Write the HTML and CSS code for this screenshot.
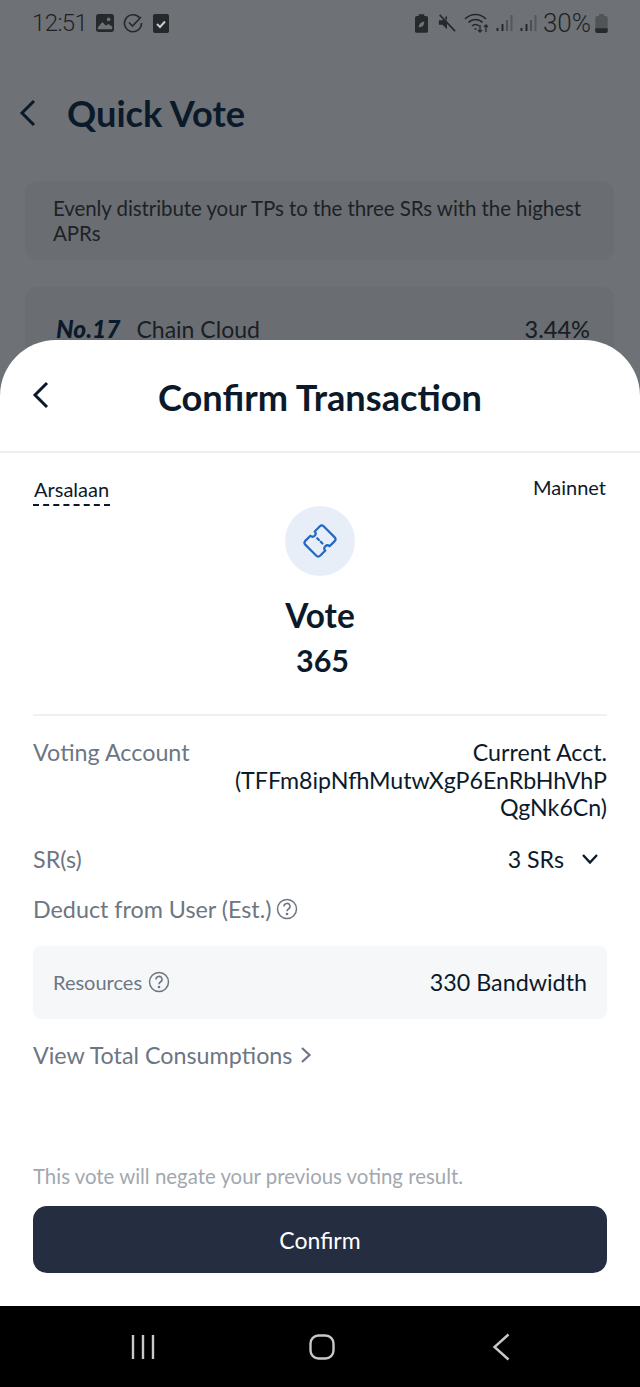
FILE: index.html
```html
<!DOCTYPE html>
<html lang="en">
<head>
<meta charset="utf-8">
<title>Confirm Transaction</title>
<link rel="stylesheet" href="styles.css">
</head>
<body>
<div class="screen">
  <div class="backdrop">
    <div class="status">
      <span class="time">12:51</span>
      <svg class="si s-img" width="18" height="18" viewBox="0 0 20 20"><rect x="0" y="0" width="20" height="20" rx="3" fill="#26292c"/><circle cx="14" cy="6" r="2" fill="#6e7276"/><path d="M2 15l5-6 4 4 2.500-2 4.500 3v3H2z" fill="#6e7276"/></svg>
      <svg class="si s-chk" width="20" height="20" viewBox="0 0 20 20" fill="none" stroke="#26292c" stroke-width="1.600"><path d="M16.500 4.800A8.500 8.500 0 1 0 18.500 10"/><path d="M6 9.500l3.500 3.500L18 4"/></svg>
      <svg class="si s-box" width="16" height="19" viewBox="0 0 16 19"><rect x="0" y="0" width="16" height="19" rx="2" fill="#26292c"/><path d="M4 10l3 3 5-5.500" fill="none" stroke="#c9cbcd" stroke-width="2"/></svg>
      <span class="grow"></span>
      <svg class="si s-leaf" width="13" height="19" viewBox="0 0 14 20"><path d="M4 0h6v2h2a2 2 0 0 1 2 2v14a2 2 0 0 1-2 2H2a2 2 0 0 1-2-2V4a2 2 0 0 1 2-2h2z" fill="#26292c"/><path d="M4 14c0-4 3-6 6-6 0 4-2 6-6 6z" fill="#6e7276"/></svg>
      <svg class="si s-mute" width="18" height="18" viewBox="0 0 20 20"><path d="M1 7h4l5-5v15l-5-5H1z" fill="#26292c"/><path d="M2 1l17 18" stroke="#26292c" stroke-width="2"/><path d="M3 0l17 18" stroke="#6e7276" stroke-width="1"/></svg>
      <svg class="si s-wifi" width="26" height="20" viewBox="0 0 26 20" fill="none" stroke="#26292c" stroke-width="1.700"><path d="M1 6c6-6 15-6 21 0"/><path d="M4.500 9.500c4-4 10-4 14 0"/><path d="M8 13c2-2 5-2 7 0"/><circle cx="11.500" cy="16" r="1" fill="#26292c" stroke="none"/><path d="M16 12v7m-2-2l2 2 2-2M22 19v-7m-2 2l2-2 2 2" stroke-width="1.300"/></svg>
      <svg class="si s-sig" width="17" height="18" viewBox="0 0 16 18"><rect x="0" y="14" width="2" height="3" fill="#26292c"/><rect x="5" y="10" width="2" height="7" fill="#26292c"/><rect x="9.500" y="6" width="2" height="11" fill="#4c4f52"/><rect x="14" y="1" width="2" height="16" fill="#55585b"/></svg>
      <svg class="si s-sig2" width="17" height="18" viewBox="0 0 16 18"><rect x="0" y="14" width="2" height="3" fill="#26292c"/><rect x="5" y="10" width="2" height="7" fill="#26292c"/><rect x="9.500" y="6" width="2" height="11" fill="#4c4f52"/><rect x="14" y="1" width="2" height="16" fill="#55585b"/></svg>
      <span class="pct">30%</span>
      <svg class="bat" width="13" height="19" viewBox="0 0 13 20"><path d="M4 0h5v2h2a2 2 0 0 1 2 2v14a2 2 0 0 1-2 2H2a2 2 0 0 1-2-2V4a2 2 0 0 1 2-2h2z" fill="#505457"/><path d="M0 15h13v3a2 2 0 0 1-2 2H2a2 2 0 0 1-2-2z" fill="#26292c"/></svg>
    </div>
    <header class="page-head">
      <svg class="page-back" width="18" height="28" viewBox="0 0 18 28" fill="none" stroke="#0b1a2b" stroke-width="3"><path d="M15 2L3 14l12 12"/></svg>
      <h1 class="page-title">Quick Vote</h1>
    </header>
    <div class="note">Evenly distribute your TPs to the three SRs with the highest APRs</div>
    <div class="sr-card">
      <b class="no">No.17</b>
      <span class="sr-name">Chain Cloud</span>
      <span class="sr-apr">3.44%</span>
    </div>
  </div>

  <section class="sheet">
    <div class="sheet-head">
      <svg class="sheet-back" width="18" height="28" viewBox="0 0 18 28" fill="none" stroke="#0b1a2b" stroke-width="3"><path d="M15 2L3 14l12 12"/></svg>
      <h2 class="sheet-title">Confirm Transac<span class="lig">ti</span>on</h2>
    </div>
    <div class="sheet-body">
      <div class="acct-row">
        <span class="acct">Arsalaan</span>
        <span class="net">Mainnet</span>
      </div>
      <div class="summary">
        <div class="badge">
          <svg width="36" height="36" viewBox="-18 -18 36 36" fill="none" stroke="#2468c0" stroke-width="2.200" stroke-linejoin="round" stroke-linecap="round"><g transform="rotate(-45)"><path d="M-13 -7.500a3 3 0 0 1 3 -3H-3a3 3 0 0 0 6 0H10a3 3 0 0 1 3 3V7.500a3 3 0 0 1 -3 3H3a3 3 0 0 0 -6 0H-10a3 3 0 0 1 -3 -3Z"/><path d="M0 -4V4" stroke-dasharray="2.500 2.500"/></g></svg>
        </div>
        <div class="action">Vote</div>
        <div class="amount">365</div>
      </div>
      <dl class="details">
        <div class="row top">
          <dt class="label">Vo<span class="lig">ti</span>ng Account</dt>
          <dd class="value addr"><span class="addr-line">Current Acct.</span><span class="addr-line">(TFFm8ipNfhMutwXgP6EnRbHhVhPQgNk6Cn)</span></dd>
        </div>
        <div class="row sr">
          <dt class="label">SR(s)</dt>
          <dd class="value srs">3 SRs
            <svg width="18" height="12" viewBox="0 0 18 12" fill="none" stroke="#0b1a2b" stroke-width="2.400"><path d="M2 2l7 7.500L16 2"/></svg>
          </dd>
        </div>
        <div class="deduct">
          <span class="label">Deduct from User (Est.)</span>
          <svg class="help" width="22" height="22" viewBox="0 0 22 22" fill="none" stroke="#6d7683" stroke-width="1.500"><circle cx="11" cy="11" r="9.500"/><path d="M8 8.500a3 3 0 1 1 4.500 2.500c-1 .6-1.500 1-1.500 2.300"/><circle cx="11" cy="16" r=".6"/></svg>
        </div>
      </dl>
      <div class="res-box">
        <span class="res-label">Resources
          <svg class="help" width="22" height="22" viewBox="0 0 22 22" fill="none" stroke="#6d7683" stroke-width="1.500"><circle cx="11" cy="11" r="9.500"/><path d="M8 8.500a3 3 0 1 1 4.500 2.500c-1 .6-1.500 1-1.500 2.300"/><circle cx="11" cy="16" r=".6"/></svg>
        </span>
        <span class="res-value">330 Bandwidth</span>
      </div>
      <div class="view-total">
        <span>View Total Consump<span class="lig">ti</span>ons</span>
        <svg width="12" height="18" viewBox="0 0 12 18" fill="none" stroke="#6d7683" stroke-width="2.200"><path d="M2 2l7.500 7L2 16"/></svg>
      </div>
      <p class="warning">This vote will negate your previous vo<span class="lig">ti</span>ng result.</p>
      <button class="confirm">Confirm</button>
    </div>
  </section>

  <nav class="navbar">
    <svg width="26" height="26" viewBox="0 0 26 26" stroke="#c8c8c8" stroke-width="2.400"><path d="M3 1v24M13 1v24M23 1v24"/></svg>
    <svg class="nav-home" width="26" height="26" viewBox="0 0 26 26" fill="none" stroke="#c8c8c8" stroke-width="2.400"><rect x="1.500" y="1.500" width="23" height="23" rx="8"/></svg>
    <svg class="nav-back" width="18" height="28" viewBox="0 0 18 28" fill="none" stroke="#c8c8c8" stroke-width="2.400"><path d="M16.500 1.500L2.500 14l14 12.500"/></svg>
  </nav>
</div>
</body>
</html>
```

FILE: styles.css
```css
* { box-sizing: border-box; }
html, body { margin: 0; padding: 0; }
body { width: 640px; height: 1387px; overflow: hidden; font-family: Lato, "Liberation Sans", sans-serif; color: #0b1a2b; background: #000; }
.lig { font-variant-ligatures: common-ligatures discretionary-ligatures; }
.screen { width: 640px; height: 1387px; display: flex; flex-direction: column; overflow: hidden; }

.backdrop { height: 400px; flex: none; background: #6e7276; overflow: hidden; color: #1a1f25; }
.status { height: 46px; padding: 0 32px 0 32px; display: flex; align-items: center; color: #26292c; }
.time { font-family: Roboto, sans-serif; font-weight: 300; font-size: 24px; letter-spacing: -.6px; color: #1f2225; }
.grow { flex: 1; }
.si { flex: none; }
.s-img { margin-left: 9px; }
.s-chk { margin-left: 9px; }
.s-box { margin-left: 10px; }
.s-mute { margin-left: 10px; }
.s-wifi { margin-left: 8px; }
.s-sig { margin-left: 6px; }
.s-sig2 { margin-left: 7px; }
.pct { margin-left: 6px; font-family: Roboto, sans-serif; font-weight: 300; font-size: 26px; color: #1f2225; }
.bat { margin-left: 4px; flex: none; }
.page-head { height: 56px; margin-top: 39px; padding-left: 19px; display: flex; align-items: center; gap: 30px; }
.page-title { margin: 0; font-size: 36.200px; font-weight: 700; color: #0b1a2b; }
.page-back { flex: none; }
.note { margin: 40px 26px 0 25px; height: 79px; padding: 15px 28px; border-radius: 12px; background: #6a6e72; font-size: 20.500px; letter-spacing: -.08px; line-height: 24.500px; color: #1d2226; }
.sr-card { margin: 27px 26px 0 25px; height: 120px; padding: 27px 24px 0 31px; border-radius: 12px; background: #6a6e72; display: flex; align-items: flex-start; font-size: 23px; line-height: 30px; }
.no { font-style: italic; font-weight: 900; font-size: 24.500px; margin-right: 16px; color: #0b1a2b; }
.sr-name { flex: 1; }
.sr-apr { font-size: 23.500px; font-weight: 500; }

.sheet { position: relative; flex: 1; margin-top: -60px; background: #fff; border-radius: 56px 56px 0 0; display: flex; flex-direction: column; min-height: 0; }
.sheet-head { height: 113px; flex: none; border-bottom: 2px solid #eceef0; display: flex; align-items: center; justify-content: center; position: relative; }
.sheet-back { position: absolute; left: 32px; top: 41px; }
.sheet-title { margin: 0; font-size: 36.200px; font-weight: 700; color: #0b1a2b; position: relative; top: 1px; }
.sheet-body { flex: 1; padding: 0 33px; display: flex; flex-direction: column; }

.acct-row { display: flex; justify-content: space-between; align-items: flex-start; height: 53px; padding-top: 22px; font-size: 20px; line-height: 24px; }
.acct { height: 31px; padding: 0 1px; border-bottom: 2px dashed #0b1a2b; line-height: 28px; }
.net { line-height: 24px; margin-right: 1px; }
.summary { display: flex; flex-direction: column; align-items: center; height: 210px; border-bottom: 2px solid #eef0f2; }
.badge { width: 70px; height: 70px; flex: none; border-radius: 50%; background: #e8eef8; display: flex; align-items: center; justify-content: center; }
.action { margin-top: 19px; font-size: 33.400px; line-height: 40px; font-weight: 700; }
.amount { margin-top: 6px; margin-left: 5px; font-size: 30.500px; line-height: 38px; font-weight: 700; }

.details { margin: 0; }
.row { display: flex; justify-content: space-between; align-items: flex-start; }
.row.top { margin-top: 23px; }
.row.top .label { margin-top: -1px; }
.row.sr { margin-top: 23px; }
.label { color: #6d7683; font-size: 23.300px; line-height: 28px; }
.value { margin: 0; text-align: right; font-size: 23.200px; line-height: 27.500px; color: #0b1a2b; }
.addr { width: 376px; word-break: break-all; }
.addr-line { display: block; }
.srs { display: flex; align-items: center; gap: 17px; padding-right: 8px; line-height: 28px; }
.deduct { margin-top: 22px; display: flex; align-items: center; gap: 5px; height: 28px; }
.help { flex: none; }
.res-box { margin-top: 23px; height: 73px; border-radius: 8px; background: #f6f7f9; padding: 0 20px; display: flex; align-items: center; justify-content: space-between; }
.res-label { display: flex; align-items: center; gap: 6px; color: #6d7683; font-size: 20px; }
.res-value { font-size: 23.300px; color: #0b1a2b; }
.view-total { margin-top: 21px; display: flex; align-items: center; gap: 8px; color: #6d7683; font-size: 23.300px; line-height: 30px; }
.warning { margin: auto 0 0; color: #a2a8b0; font-size: 20.400px; line-height: 26px; }
.confirm { margin: 17px 0 33px; height: 67px; width: 100%; border: 0; border-radius: 14px; background: #252d41; color: #fff; font: 400 23px Lato, "Liberation Sans", sans-serif; flex: none; }

.navbar { height: 81px; flex: none; background: #000; display: flex; align-items: center; padding-left: 130px; }
.nav-home { margin-left: 153px; }
.nav-back { margin-left: 157px; }
```
